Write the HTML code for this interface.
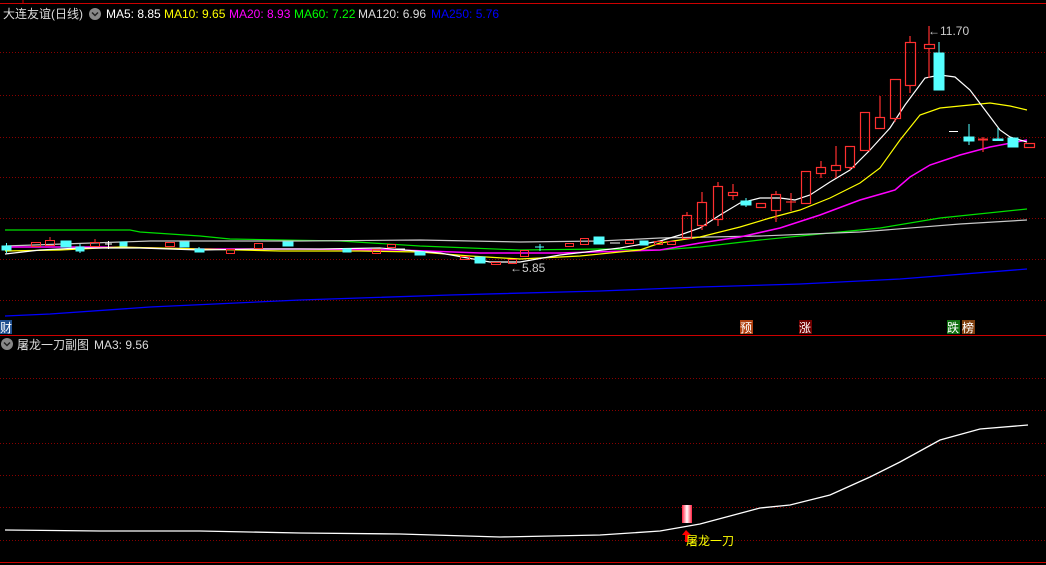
<!DOCTYPE html>
<html><head><meta charset="utf-8"><style>
html,body{margin:0;padding:0;background:#000;width:1046px;height:565px;overflow:hidden}
svg{display:block}
text{font-family:"Liberation Sans","Noto Sans CJK SC",sans-serif}
</style></head><body>
<svg width="1046" height="565" viewBox="0 0 1046 565" xmlns="http://www.w3.org/2000/svg">
<rect width="1046" height="565" fill="#000"/>
<line x1="0" y1="3.5" x2="1046" y2="3.5" stroke="#c00" stroke-width="1"/>
<line x1="23" y1="0" x2="23" y2="3" stroke="#c00"/>
<g stroke="#800" stroke-width="1" stroke-dasharray="1,2">
<line x1="0" y1="52.5" x2="1046" y2="52.5"/><line x1="0" y1="95.5" x2="1046" y2="95.5"/>
<line x1="0" y1="137.5" x2="1046" y2="137.5"/><line x1="0" y1="177.5" x2="1046" y2="177.5"/>
<line x1="0" y1="218.5" x2="1046" y2="218.5"/><line x1="0" y1="259.5" x2="1046" y2="259.5"/>
<line x1="0" y1="300.5" x2="1046" y2="300.5"/>
<line x1="0" y1="378.5" x2="1046" y2="378.5"/><line x1="0" y1="410.5" x2="1046" y2="410.5"/>
<line x1="0" y1="443.5" x2="1046" y2="443.5"/><line x1="0" y1="475.5" x2="1046" y2="475.5"/>
<line x1="0" y1="507.5" x2="1046" y2="507.5"/><line x1="0" y1="540.5" x2="1046" y2="540.5"/>
</g>
<line x1="0" y1="335.5" x2="1046" y2="335.5" stroke="#c00"/>
<line x1="0" y1="562.5" x2="1046" y2="562.5" stroke="#c00"/>

<polyline fill="none" stroke="#0000ff" stroke-width="1.3" points="5,316 50,314 150,307 300,300 450,295 600,291 700,287 800,284 900,279 1027,269"/>
<polyline fill="none" stroke="#00e000" stroke-width="1.2" points="5,230 130,230 140,232 200,236 230,239 340,241 420,246 470,248 520,250 600,249 660,250 700,247 760,240 820,234 880,228 940,218 1027,209"/>
<polyline fill="none" stroke="#c8c8c8" stroke-width="1.2" points="5,246 150,241 300,241 420,240 520,242 600,241 660,238 760,236 860,232 960,224 1027,220"/>
<polyline fill="none" stroke="#ff00ff" stroke-width="1.5" points="5,247 100,247 200,249 300,249 400,250 480,253 560,253 660,250 700,243 740,237 780,228 820,215 860,200 895,190 910,177 930,165 960,155 990,147 1027,140"/>
<polyline fill="none" stroke="#ffff00" stroke-width="1.2" points="5,251 60,250 120,247 200,249 280,251 360,251 420,252 470,256 520,259 580,256 640,250 660,243 700,237 740,227 770,218 800,210 830,198 860,183 880,168 900,140 920,115 940,108 960,106 990,103 1010,106 1027,110"/>
<polyline fill="none" stroke="#fff" stroke-width="1.2" points="5,254 40,250 80,248 140,248 200,250 260,249 320,249 380,248 440,253 490,262 520,262 560,255 620,248 660,241 680,235 700,228 720,215 740,203 760,198 780,198 795,200 810,195 830,182 850,170 870,150 890,128 905,105 925,78 940,75 955,77 970,90 985,110 1000,130 1010,137 1020,140 1027,142"/>

<g stroke-width="1">
<g fill="#55ffff" stroke="#55ffff">
<rect x="2" y="246" width="9" height="4"/><line x1="6.5" y1="243" x2="6.5" y2="253"/>
<rect x="61" y="241" width="10" height="6"/>
<rect x="76" y="247" width="8" height="4"/><line x1="80" y1="244" x2="80" y2="253"/>
<rect x="120" y="242" width="7" height="4"/>
<rect x="180" y="242" width="9" height="5"/>
<rect x="195" y="249" width="9" height="3"/><line x1="199" y1="247" x2="199" y2="251"/>
<rect x="283" y="242" width="10" height="4"/>
<rect x="343" y="249" width="8" height="3"/>
<rect x="415" y="252" width="10" height="3"/>
<rect x="475" y="257" width="10" height="6"/>
<rect x="594" y="237" width="10" height="7"/>
<rect x="640" y="241" width="8" height="4"/>
<line x1="535" y1="247" x2="544" y2="247"/><line x1="540" y1="244" x2="540" y2="251"/>
</g>
<g fill="none" stroke="#ff3030">
<rect x="31.5" y="242.5" width="9" height="4"/>
<rect x="45.5" y="240.5" width="9" height="5"/><line x1="50" y1="237" x2="50" y2="240"/>
<rect x="90.5" y="242.5" width="9" height="4"/><line x1="95" y1="239" x2="95" y2="242"/>
<rect x="165.5" y="242.5" width="9" height="4"/>
<rect x="226.5" y="249.5" width="8" height="4"/>
<rect x="254.5" y="243.5" width="8" height="5"/>
<rect x="372.5" y="249.5" width="8" height="4"/>
<rect x="387.5" y="244.5" width="8" height="3"/>
<rect x="460.5" y="256.5" width="9" height="3"/>
<rect x="491.5" y="262.5" width="9" height="2"/>
<rect x="508.5" y="259.5" width="8" height="4"/>
<rect x="520.5" y="250.5" width="8" height="6"/>
<rect x="565.5" y="243.5" width="8" height="3"/>
<rect x="580.5" y="238.5" width="8" height="6"/>
<rect x="625.5" y="240.5" width="8" height="3"/>
<rect x="654.5" y="241.5" width="8" height="3"/>
<rect x="667.5" y="241.5" width="8" height="3"/>
</g>
<g stroke="#fff"><line x1="105" y1="244" x2="112" y2="244"/><line x1="108.5" y1="241" x2="108.5" y2="249"/>
<line x1="395" y1="249" x2="405" y2="249"/><line x1="610" y1="243" x2="620" y2="243"/></g>
</g>

<g fill="none" stroke="#ff3030" stroke-width="1.2">
<rect x="682.5" y="215.5" width="9" height="23"/><line x1="687" y1="212" x2="687" y2="215"/>
<rect x="697.5" y="202.5" width="9" height="23"/><line x1="702" y1="192" x2="702" y2="202"/><line x1="702" y1="225" x2="702" y2="230"/>
<rect x="713.5" y="186.5" width="9" height="33"/><line x1="718" y1="182" x2="718" y2="186"/><line x1="718" y1="220" x2="718" y2="226"/>
<rect x="728.5" y="192.5" width="9" height="3"/><line x1="733" y1="184" x2="733" y2="192"/><line x1="733" y1="196" x2="733" y2="200"/>
<rect x="756.5" y="203.5" width="9" height="4"/>
<rect x="771.5" y="194.5" width="9" height="16"/><line x1="776" y1="191" x2="776" y2="194"/><line x1="776" y1="210" x2="776" y2="222"/>
<line x1="786" y1="202" x2="796" y2="202"/><line x1="791" y1="193" x2="791" y2="211"/>
<rect x="801.5" y="171.5" width="9" height="32"/>
<rect x="816.5" y="167.5" width="9" height="6"/><line x1="821" y1="161" x2="821" y2="167"/><line x1="821" y1="173" x2="821" y2="178"/>
<rect x="831.5" y="165.5" width="9" height="5"/><line x1="836" y1="146" x2="836" y2="165"/><line x1="836" y1="170" x2="836" y2="178"/>
<rect x="845.5" y="146.5" width="9" height="21"/><line x1="850" y1="167" x2="850" y2="170"/>
<rect x="860.5" y="112.5" width="9" height="38"/>
<rect x="875.5" y="117.5" width="9" height="11"/><line x1="880" y1="96" x2="880" y2="117"/>
<rect x="890.5" y="79.5" width="10" height="39"/><line x1="895" y1="118" x2="895" y2="122"/>
<rect x="905.5" y="42.5" width="10" height="43"/><line x1="910" y1="36" x2="910" y2="42"/><line x1="910" y1="85" x2="910" y2="93"/>
<rect x="924.5" y="44.5" width="10" height="4"/><line x1="929" y1="26" x2="929" y2="44"/><line x1="929" y1="48" x2="929" y2="78"/>
<line x1="978" y1="139.5" x2="988" y2="139.5" stroke-width="2"/><line x1="983" y1="137" x2="983" y2="152"/>
<rect x="1024.5" y="143.5" width="10" height="4"/>
</g>
<g fill="#55ffff" stroke="#55ffff">
<rect x="741" y="201" width="10" height="4"/><line x1="746" y1="198" x2="746" y2="207"/>
<rect x="934" y="53" width="10" height="37"/><line x1="939" y1="42" x2="939" y2="53"/>
<rect x="964" y="137" width="10" height="4"/><line x1="969" y1="124" x2="969" y2="145"/>
<rect x="993" y="139" width="10" height="1.5"/><line x1="998" y1="128" x2="998" y2="140"/>
<rect x="1008" y="138" width="10" height="9"/>
</g>
<line x1="949" y1="131.5" x2="958" y2="131.5" stroke="#fff"/>

<text x="928" y="35" font-size="12" fill="#ccc">←11.70</text>
<text x="510" y="272" font-size="12" fill="#ccc">←5.85</text>

<text x="3" y="18" font-size="12" fill="#ddd">大连友谊(日线)</text>
<circle cx="95" cy="14" r="6" fill="#888"/><path d="M92 12.5 L95 15.5 L98 12.5" stroke="#222" stroke-width="1.5" fill="none"/>
<text x="106" y="18" font-size="12" fill="#fff">MA5: 8.85</text>
<text x="164" y="18" font-size="12" fill="#ffff00">MA10: 9.65</text>
<text x="229" y="18" font-size="12" fill="#ff00ff">MA20: 8.93</text>
<text x="294" y="18" font-size="12" fill="#00ff00">MA60: 7.22</text>
<text x="358" y="18" font-size="12" fill="#ddd">MA120: 6.96</text>
<text x="431" y="18" font-size="12" fill="#0000ff">MA250: 5.76</text>

<rect x="0" y="320" width="12" height="14" fill="#1f4f8f"/><text x="0" y="332" font-size="12" fill="#fff">财</text>
<rect x="740" y="320" width="13" height="14" fill="#b04010"/><text x="740" y="332" font-size="12" fill="#fff">预</text>
<rect x="799" y="320" width="13" height="14" fill="#700000"/><text x="799" y="332" font-size="12" fill="#fff">涨</text>
<rect x="947" y="320" width="13" height="14" fill="#107010"/><text x="947" y="332" font-size="12" fill="#fff">跌</text>
<rect x="962" y="320" width="13" height="14" fill="#804010"/><text x="962" y="332" font-size="12" fill="#fff">榜</text>

<circle cx="7" cy="344" r="6" fill="#888"/><path d="M4 342.5 L7 345.5 L10 342.5" stroke="#222" stroke-width="1.5" fill="none"/>
<text x="17" y="349" font-size="12" fill="#ddd">屠龙一刀副图</text>
<text x="94" y="349" font-size="12" fill="#ddd">MA3: 9.56</text>
<polyline fill="none" stroke="#fff" stroke-width="1.3" points="5,530 100,531 200,531 300,533 400,534 500,537 600,535 660,531 700,524 730,516 760,508 790,505 830,495 870,477 900,462 940,440 980,429 1028,425"/>
<defs><linearGradient id="g" x1="0" x2="1"><stop offset="0" stop-color="#ff2040"/><stop offset="0.5" stop-color="#fff"/><stop offset="1" stop-color="#ff2040"/></linearGradient></defs>
<rect x="682" y="505" width="10" height="18" fill="url(#g)"/>
<path d="M686 530 L682 535 L685 535 L685 542 L688 542 L688 535 L691 535 Z" fill="#f00"/>
<text x="686" y="545" font-size="12" fill="#ffff00">屠龙一刀</text>
</svg>
</body></html>
